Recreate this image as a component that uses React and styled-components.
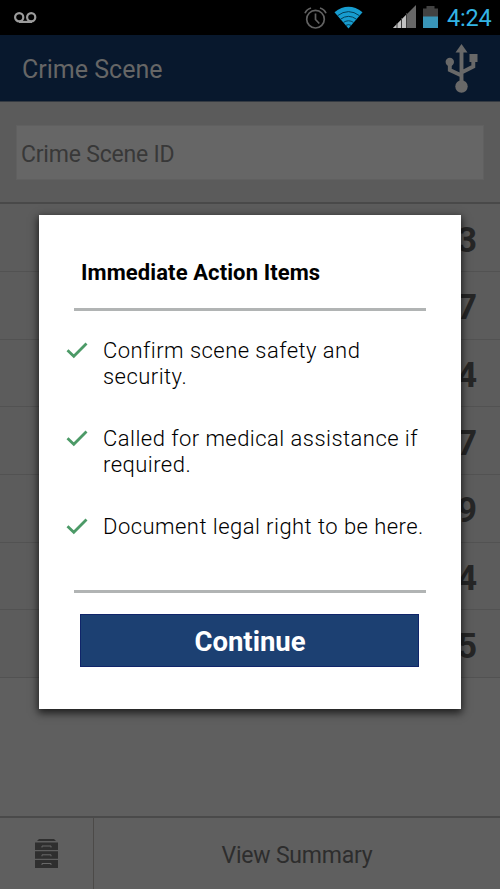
import styled, { createGlobalStyle } from "styled-components";

const GlobalStyle = createGlobalStyle`
  * {
    box-sizing: border-box;
    margin: 0;
    padding: 0;
  }

  body {
    background: #5c5c5c;
    font-family: Roboto, "Liberation Sans", sans-serif;
  }
`;

const Screen = styled.div`
  position: relative;
  width: 500px;
  height: 889px;
  display: flex;
  flex-direction: column;
  overflow: hidden;
  background: #5f5f5f;
`;

const StatusBar = styled.div`
  height: 35px;
  display: flex;
  align-items: center;
  justify-content: space-between;
  padding: 0 9px 0 14px;
  background: #000;
`;

const StatusIcons = styled.div`
  height: 35px;
  display: flex;
  align-items: center;
`;

const AlarmIcon = styled.svg`
  width: 23px;
  height: 22px;
  margin-right: 7px;
`;

const WifiIcon = styled.svg`
  width: 29px;
  height: 23px;
  margin: -1px 29px 0 0;
`;

const SignalIcon = styled.svg`
  width: 24px;
  height: 23px;
  margin: -2px 7px 0 0;
`;

const BatteryIcon = styled.svg`
  width: 15px;
  height: 22px;
  margin: -1px 9px 0 0;
`;

const VoicemailIcon = styled.svg`
  width: 23px;
  height: 12px;
`;

const Clock = styled.span`
  width: 44px;
  padding-top: 2px;
  font-size: 23.5px;
  line-height: 35px;
  letter-spacing: -0.2px;
  white-space: nowrap;
  color: #33b5e5;
`;

const Header = styled.header`
  height: 67px;
  display: flex;
  align-items: center;
  justify-content: space-between;
  padding: 0 22px;
  background: #08182d;
  border-bottom: 1px solid #343a42;
`;

const HeaderTitle = styled.h1`
  padding-top: 2px;
  font-size: 25px;
  font-weight: 400;
  color: #666;
`;

const UsbIcon = styled.svg`
  width: 33px;
  height: 49px;
  margin-top: 1px;
`;

const SearchArea = styled.div`
  height: 102.2px;
  padding: 23px 16px 0;
  background: #5b5b5b;
  border-bottom: 2px solid #494949;
`;

const Field = styled.div`
  height: 55px;
  padding-left: 4px;
  border: 1px solid #606060;
  background: #666;
  font-size: 23px;
  line-height: 57px;
  letter-spacing: -0.2px;
  color: #383838;
`;

const CountRow = styled.div`
  height: 67.7px;
  display: flex;
  align-items: center;
  justify-content: flex-end;
  padding: 5px 23px 0 0;
  border-bottom: 1px solid #525252;
  background: #5c5c5c;
  font-size: 35px;
  font-weight: 700;
  color: #262626;
`;

const Footer = styled.footer`
  height: 73px;
  display: flex;
  margin-top: auto;
  border-top: 2px solid #4a4a4a;
  background: #5f5f5f;
`;

const CabinetButton = styled.div`
  width: 94px;
  display: flex;
  justify-content: center;
  align-items: center;
  border-right: 1px solid #4c4a48;
`;

const CabinetIcon = styled.svg`
  width: 23px;
  height: 29px;
`;

const SummaryButton = styled.div`
  flex: 1;
  display: flex;
  align-items: center;
  justify-content: center;
  padding-top: 4px;
  font-size: 23px;
  letter-spacing: -0.2px;
  color: #2d2d2d;
`;

const Dialog = styled.div`
  position: absolute;
  top: 215px;
  left: 39px;
  width: 422px;
  height: 494px;
  padding: 0 35px;
  background: #fff;
  box-shadow: 0 3px 8px 1px rgba(0, 0, 0, 0.7);
`;

const DialogTitle = styled.h2`
  padding: 45px 0 0 7px;
  height: 93px;
  font-size: 22px;
  line-height: 26px;
  font-weight: 700;
  letter-spacing: 0.1px;
  color: #000;
`;

const Divider = styled.div`
  height: 3px;
  background: #b1b4b4;
`;

const ActionList = styled.ul`
  height: 279px;
  padding-top: 27px;
  list-style: none;
`;

const ActionItem = styled.li`
  display: flex;
  margin: 0 -20px 36px -8px;
  font-size: 22px;
  font-weight: 300;
  line-height: 26px;
  letter-spacing: 0.46px;
  white-space: pre-line;
  color: #000;
`;

const CheckIcon = styled.svg`
  flex: none;
  width: 22px;
  height: 18px;
  margin: 3px 15px 0 0;
`;

const ContinueButton = styled.button`
  display: block;
  width: 339px;
  height: 53px;
  margin: 21px 0 0 6px;
  padding: 2px 0 0 1px;
  border: 1px solid #10256a;
  background: #1c4072;
  font-family: inherit;
  font-size: 27.5px;
  font-weight: 700;
  color: #fff;
`;

const counts = [3, 7, 4, 7, 9, 4, 5];

const actions = [
  "Confirm scene safety and\nsecurity.",
  "Called for medical assistance if\nrequired.",
  "Document legal right to be here.",
];

function Status() {
  return (
    <StatusBar>
      <VoicemailIcon viewBox="0 0 23 12" fill="none" stroke="#9c9c9c" strokeWidth="2.2">
        <circle cx="5.2" cy="5.2" r="4.1" />
        <circle cx="17.2" cy="5.2" r="4.1" />
        <path d="M5 9.900h13" strokeWidth="2.2" />
      </VoicemailIcon>
      <StatusIcons>
        <AlarmIcon viewBox="0 0 23 22" fill="none" stroke="#626262" strokeWidth="1.7">
          <circle cx="11.5" cy="12.2" r="8.8" />
          <path d="M11.5 6.500v6l3.800 4" />
          <path d="M1 6.200Q2.500 2.500 7 1M22 6.200Q20.500 2.500 16 1" />
        </AlarmIcon>
        <WifiIcon viewBox="0 0 29 23">
          <path d="M.5 6.200Q14.500-4.500 28.500 6.200L14.500 22.500Z" fill="#179dd0" />
          <path
            d="M3.500 9.700Q14.500 1.500 25.500 9.700M6.500 13.200Q14.500 7.500 22.500 13.200M9.300 16.500Q14.500 13 19.700 16.500M11.800 19.400Q14.500 17.800 17.200 19.400"
            fill="none"
            stroke="#04405a"
          />
        </WifiIcon>
        <SignalIcon viewBox="0 0 24 23">
          <path d="M1 23 24 0v23Z" fill="#676767" />
          <path d="M1 23 14.500 9.500V23Z" fill="#c2c2c2" />
          <path d="M5 18v5M9.500 13v10M14.500 8v15" stroke="#3c3c3c" />
        </SignalIcon>
        <BatteryIcon viewBox="0 0 15 22">
          <path d="M0 2.500h3.500V0h8v2.500H15V22H0Z" fill="#424242" />
          <path d="M0 10.500h15V22H0Z" fill="#3995b8" />
        </BatteryIcon>
        <Clock>4:24</Clock>
      </StatusIcons>
    </StatusBar>
  );
}

function App() {
  return (
    <>
      <GlobalStyle />
      <Screen>
        <Status />
        <Header>
          <HeaderTitle>Crime Scene</HeaderTitle>
          <UsbIcon viewBox="0 0 33 49" fill="#686868">
            <path d="M16.500 0 22.500 8.500h-12Z" />
            <path
              d="M16.500 7v35M4.800 18v8L16.500 31.500M28.300 14v8.500L16.500 28.500"
              fill="none"
              stroke="#686868"
              strokeWidth="3.900"
            />
            <circle cx="4.800" cy="18" r="4.200" />
            <path d="M24.500 10h8v8h-8Z" />
            <circle cx="16.500" cy="42.500" r="6.200" />
          </UsbIcon>
        </Header>
        <SearchArea>
          <Field>Crime Scene ID</Field>
        </SearchArea>
        {counts.map((count, index) => (
          <CountRow key={index}>{count}</CountRow>
        ))}
        <Footer>
          <CabinetButton>
            <CabinetIcon viewBox="0 0 23 29" fill="#2f2f2f">
              <path d="M4 0h15l2 2H2ZM0 3.500h23V11H0ZM0 12.300h23v7.400H0ZM0 21h23v8H0Z" />
              <path
                d="M7 8.500V7h9v1.500M7 17.300v-1.500h9v1.500M7 26v-1.500h9V26"
                fill="none"
                stroke="#686868"
              />
            </CabinetIcon>
          </CabinetButton>
          <SummaryButton>View Summary</SummaryButton>
        </Footer>
        <Dialog>
          <DialogTitle>Immediate Action Items</DialogTitle>
          <Divider />
          <ActionList>
            {actions.map((action) => (
              <ActionItem key={action}>
                <CheckIcon viewBox="0 0 22 18">
                  <path
                    d="M1.500 9.200 7.800 15.200 20.500 2.500"
                    fill="none"
                    stroke="#4c9a67"
                    strokeWidth="2.800"
                  />
                </CheckIcon>
                {action}
              </ActionItem>
            ))}
          </ActionList>
          <Divider />
          <ContinueButton>Continue</ContinueButton>
        </Dialog>
      </Screen>
    </>
  );
}

export default App;
